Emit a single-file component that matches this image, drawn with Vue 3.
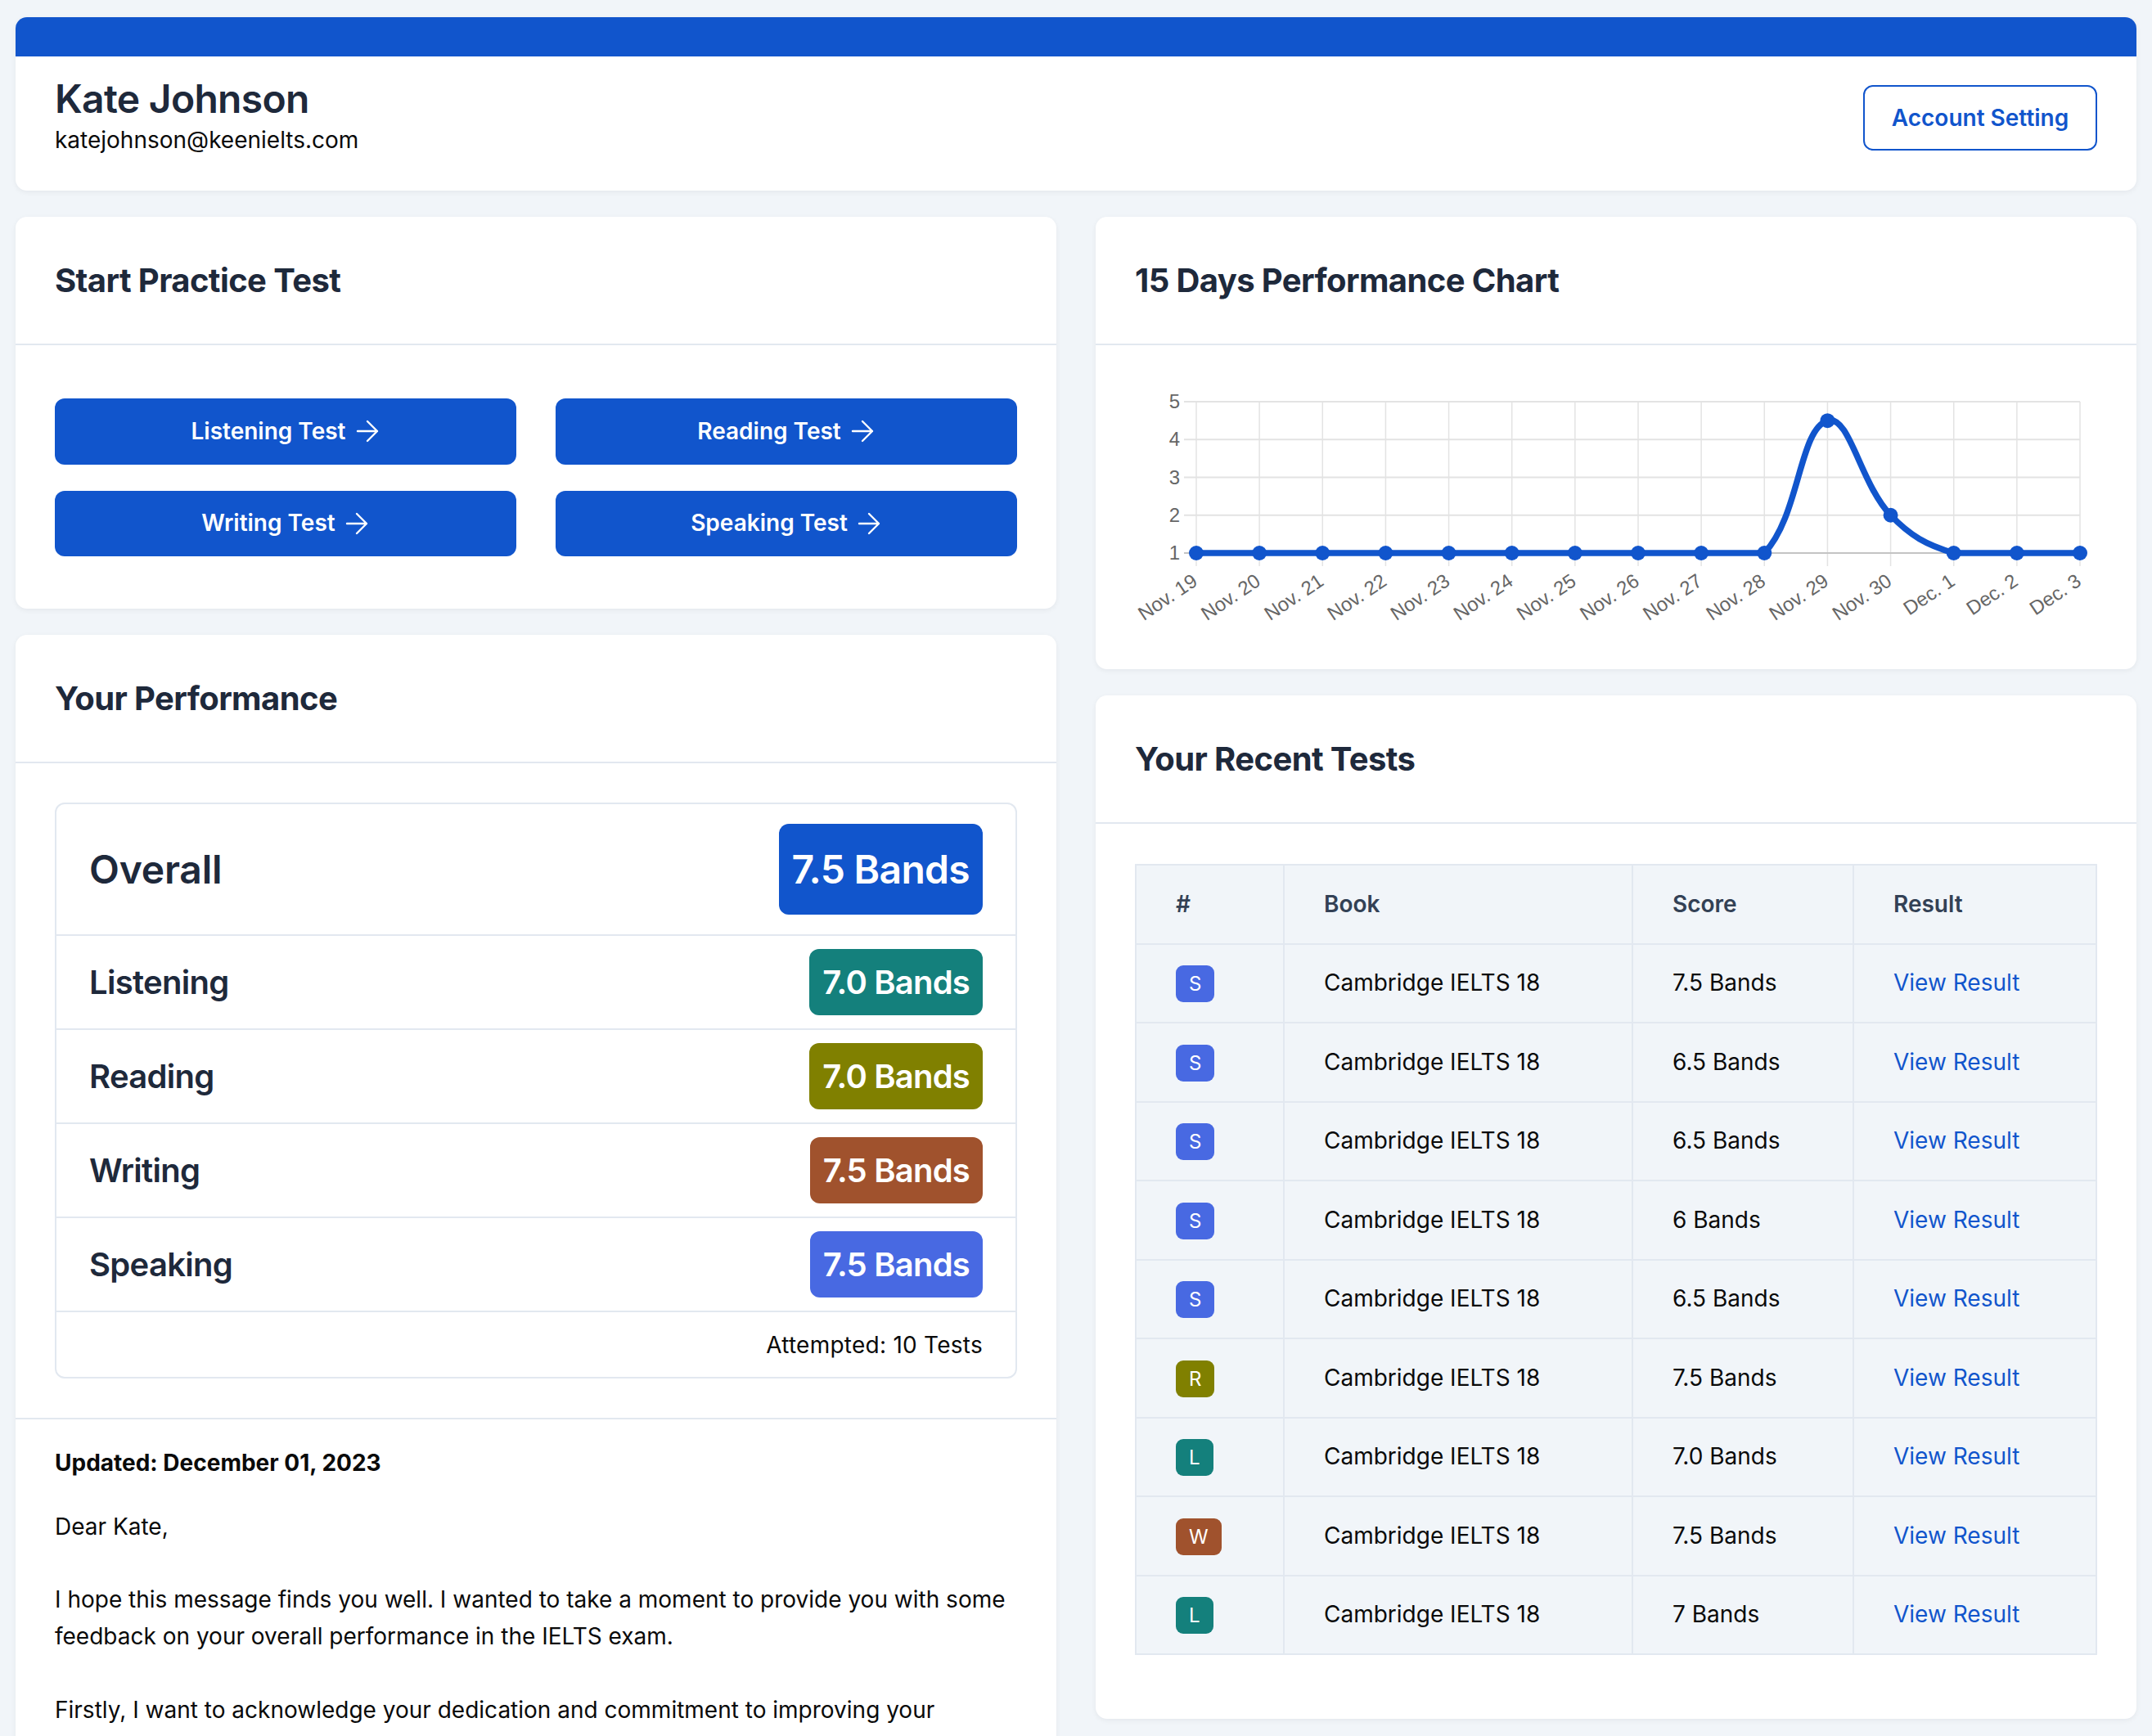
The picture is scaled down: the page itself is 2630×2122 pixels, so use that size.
<script setup>
const tests = ['Listening Test', 'Reading Test', 'Writing Test', 'Speaking Test']

const perf = [
  { name: 'Listening', band: '7.0 Bands', cls: 'teal' },
  { name: 'Reading', band: '7.0 Bands', cls: 'olive' },
  { name: 'Writing', band: '7.5 Bands', cls: 'sienna' },
  { name: 'Speaking', band: '7.5 Bands', cls: 'royal' },
]

const recent = [
  { type: 'S', score: '7.5 Bands', cls: 'royal' },
  { type: 'S', score: '6.5 Bands', cls: 'royal' },
  { type: 'S', score: '6.5 Bands', cls: 'royal' },
  { type: 'S', score: '6 Bands', cls: 'royal' },
  { type: 'S', score: '6.5 Bands', cls: 'royal' },
  { type: 'R', score: '7.5 Bands', cls: 'olive' },
  { type: 'L', score: '7.0 Bands', cls: 'teal' },
  { type: 'W', score: '7.5 Bands', cls: 'sienna' },
  { type: 'L', score: '7 Bands', cls: 'teal' },
]

// chart, same maths as a chart.js line with tension .4
const labels = ['Nov. 19', 'Nov. 20', 'Nov. 21', 'Nov. 22', 'Nov. 23', 'Nov. 24', 'Nov. 25', 'Nov. 26', 'Nov. 27', 'Nov. 28', 'Nov. 29', 'Nov. 30', 'Dec. 1', 'Dec. 2', 'Dec. 3']
const values = [1, 1, 1, 1, 1, 1, 1, 1, 1, 1, 4.5, 2, 1, 1, 1]
const left = 75
const right = 1155
const top = 21
const bottom = 206
const stepX = (right - left) / (labels.length - 1)
const xAt = (i) => left + i * stepX
const yAt = (v) => bottom - ((v - 1) / 4) * (bottom - top)
const yTicks = [5, 4, 3, 2, 1]
const points = values.map((v, i) => ({ x: xAt(i), y: yAt(v) }))

const dist = (a, b) => Math.hypot(a.x - b.x, a.y - b.y)
const clampY = (y) => Math.min(Math.max(y, top), bottom)

const linePath = points.reduce((d, p, i) => {
  if (i === 0) return `M${p.x} ${p.y}`
  const prev = points[i - 1]
  const before = points[i - 2] || prev
  const after = points[i + 1] || p
  const cp = (a, b, c, t) => {
    const d1 = dist(a, b)
    const d2 = dist(b, c)
    const s = d1 + d2 === 0 ? 0 : t / (d1 + d2)
    return { dx: s * (c.x - a.x), dy: s * (c.y - a.y), d1, d2 }
  }
  const c1 = cp(before, prev, p, 0.4)
  const c2 = cp(prev, p, after, 0.4)
  const x1 = prev.x + c1.dx * c1.d2
  const y1 = clampY(prev.y + c1.dy * c1.d2)
  const x2 = p.x - c2.dx * c2.d1
  const y2 = clampY(p.y - c2.dy * c2.d1)
  return `${d} C${x1} ${y1} ${x2} ${y2} ${p.x} ${p.y}`
}, '')
</script>

<template>
  <div class="page">
    <div class="card profile">
      <div class="profile_bar"></div>
      <div class="profile_body">
        <div>
          <h1 class="profile_name">Kate Johnson</h1>
          <div class="profile_mail">katejohnson@keenielts.com</div>
        </div>
        <a class="account_btn">Account Setting</a>
      </div>
    </div>

    <div class="columns">
      <div class="column">
        <section class="card">
          <div class="card_head"><h2>Start Practice Test</h2></div>
          <div class="test_grid">
            <a v-for="t in tests" :key="t" class="test_btn">
              {{ t }}
              <svg viewBox="0 0 24 24" width="32" height="32" fill="none" stroke="currentColor" stroke-width="1.8" stroke-linecap="round" stroke-linejoin="round">
                <path d="M3 12h18M12 3l9 9-9 9" />
              </svg>
            </a>
          </div>
        </section>

        <section class="card">
          <div class="card_head"><h2>Your Performance</h2></div>
          <div class="perf_wrap">
            <div class="perf_box">
              <div class="perf_row perf_overall">
                <span>Overall</span>
                <span class="band blue">7.5 Bands</span>
              </div>
              <div v-for="p in perf" :key="p.name" class="perf_row">
                <span>{{ p.name }}</span>
                <span class="band" :class="p.cls">{{ p.band }}</span>
              </div>
              <div class="perf_note">Attempted: 10 Tests</div>
            </div>
          </div>
          <div class="letter">
            <p class="letter_date">Updated: December 01, 2023</p>
            <p class="letter_hi">Dear Kate,</p>
            <p>I hope this message finds you well. I wanted to take a moment to provide you with some feedback on your overall performance in the IELTS exam.</p>
            <p>Firstly, I want to acknowledge your dedication and commitment to improving your</p>
          </div>
        </section>
      </div>

      <div class="column">
        <section class="card">
          <div class="card_head"><h2>15 Days Performance Chart</h2></div>
          <div class="chart_body">
            <svg class="chart" viewBox="0 0 1176 301" width="1176" height="301">
              <g stroke="#e3e3e3" stroke-width="2">
                <line v-for="v in yTicks" :key="v" :x1="left - 15" :x2="right" :y1="yAt(v)" :y2="yAt(v)" />
              </g>
              <g stroke="#e3e3e3" stroke-width="1.5">
                <line v-for="(l, i) in labels" :key="l" :x1="xAt(i)" :x2="xAt(i)" :y1="top" :y2="bottom + 16" />
              </g>
              <line :x1="left - 15" :x2="right" :y1="bottom" :y2="bottom" stroke="#c4c4c4" stroke-width="2" />
              <text v-for="v in yTicks" :key="v" class="tick" :x="left - 20" :y="yAt(v) + 8" text-anchor="end">{{ v }}</text>
              <text v-for="(l, i) in labels" :key="l" class="tick" text-anchor="end" :transform="`translate(${xAt(i) + 3} ${bottom + 38}) rotate(-34)`">{{ l }}</text>
              <path :d="linePath" fill="none" stroke="#1155cc" stroke-width="7.5" />
              <circle v-for="(p, i) in points" :key="i" :cx="p.x" :cy="p.y" r="9" fill="#1155cc" />
            </svg>
          </div>
        </section>

        <section class="card">
          <div class="card_head"><h2>Your Recent Tests</h2></div>
          <div class="table_wrap">
            <table class="recent">
              <thead>
                <tr>
                  <th class="col_type">#</th>
                  <th class="col_book">Book</th>
                  <th class="col_score">Score</th>
                  <th>Result</th>
                </tr>
              </thead>
              <tbody>
                <tr v-for="(r, i) in recent" :key="i">
                  <td><span class="tag" :class="r.cls">{{ r.type }}</span></td>
                  <td>Cambridge IELTS 18</td>
                  <td>{{ r.score }}</td>
                  <td><a class="view_link">View Result</a></td>
                </tr>
              </tbody>
            </table>
          </div>
        </section>
      </div>
    </div>
  </div>
</template>

<style scoped>
.page {
  box-sizing: border-box;
  height: 2122px;
  overflow: hidden;
  padding: 21px 19px 0;
  background: #f1f5f9;
  font-family: Inter, "Liberation Sans", sans-serif;
  font-size: 28px;
  line-height: 44.8px;
  color: #0a0a0a;
}

.card {
  background: #fff;
  border-radius: 14px;
  box-shadow: 0 2px 6px rgba(15, 23, 42, 0.06);
  overflow: hidden;
}

.profile_bar {
  height: 48px;
  background: #1155cc;
}

.profile_body {
  display: flex;
  justify-content: space-between;
  align-items: center;
  padding: 24px 48px 42px;
}

.profile_name {
  margin: 0 0 2px;
  font-size: 48px;
  line-height: 56px;
  font-weight: 600;
  letter-spacing: -0.7px;
  color: #1e293b;
}

.profile_mail {
  line-height: 40px;
}

.account_btn {
  box-sizing: border-box;
  width: 286px;
  height: 80px;
  margin-top: 4px;
  display: flex;
  align-items: center;
  justify-content: center;
  border: 2px solid #1155cc;
  border-radius: 12px;
  color: #1155cc;
  font-weight: 600;
}

.columns {
  display: grid;
  grid-template-columns: 1272px 1272px;
  gap: 48px;
  margin-top: 32px;
}

.column {
  display: flex;
  flex-direction: column;
  gap: 32px;
  min-width: 0;
}

.card_head {
  height: 157px;
  box-sizing: border-box;
  display: flex;
  align-items: center;
  padding: 0 48px;
  border-bottom: 2px solid #e2e8f0;
}

.card_head h2 {
  margin: 0;
  font-size: 40px;
  line-height: 60px;
  font-weight: 700;
  letter-spacing: -0.6px;
  color: #1e293b;
}

.test_grid {
  display: grid;
  grid-template-columns: 1fr 1fr;
  gap: 32px 48px;
  padding: 65px 48px 64px;
}

.test_btn {
  height: 80.5px;
  display: flex;
  align-items: center;
  justify-content: center;
  gap: 10px;
  border-radius: 12px;
  background: #1155cc;
  color: #fff;
  font-weight: 600;
}

.perf_wrap {
  padding: 48px 48px;
  border-bottom: 2px solid #e2e8f0;
}

.perf_box {
  border: 2px solid #e2e8f0;
  border-radius: 12px;
}

.perf_row {
  display: flex;
  align-items: center;
  justify-content: space-between;
  padding: 16px 40px;
  border-bottom: 2px solid #e2e8f0;
  font-size: 40px;
  line-height: 60px;
  font-weight: 600;
  letter-spacing: -0.7px;
  color: #1e293b;
}

.perf_overall {
  padding: 24px 40px;
  font-size: 48px;
  letter-spacing: -0.2px;
}

.band {
  padding: 10.5px 16px;
  border-radius: 12px;
  letter-spacing: -0.8px;
  color: #fff;
}

.perf_overall .band {
  padding: 19.5px 16px;
  line-height: 72px;
  letter-spacing: -0.7px;
}

.blue { background: #1155cc; }
.teal { background: #14807c; }
.olive { background: #808000; }
.sienna { background: #a0522d; }
.royal { background: #4869e2; }

.perf_note {
  padding: 19.5px 40px;
  line-height: 40px;
  text-align: right;
  letter-spacing: 0.25px;
}

.letter {
  padding: 31px 48px 0;
}

.letter p {
  margin: 0 0 44.8px;
}

.letter .letter_date {
  margin-bottom: 33px;
  font-weight: 700;
}

.chart_body {
  padding: 48px 48px 47px;
}

.chart {
  display: block;
}

.tick {
  font-family: "Liberation Sans", Arial, sans-serif;
  font-size: 24px;
  fill: #666;
}

.table_wrap {
  padding: 49px 48px 78px;
}

.recent {
  width: 1176px;
  border-collapse: collapse;
  table-layout: fixed;
  background: #f1f5f9;
}

.recent th,
.recent td {
  box-sizing: border-box;
  height: 96.5px;
  padding: 0 48px;
  border: 2px solid #e2e8f0;
  text-align: left;
}

.recent th {
  font-weight: 600;
  color: #334155;
}

.col_type { width: 181px; }
.col_book { width: 426px; }
.col_score { width: 270px; }

.tag {
  display: inline-block;
  vertical-align: middle;
  padding: 0 16px;
  height: 45px;
  line-height: 45px;
  border-radius: 9px;
  font-size: 24px;
  font-weight: 400;
  color: #fff;
}

.view_link {
  color: #1155cc;
}
</style>
